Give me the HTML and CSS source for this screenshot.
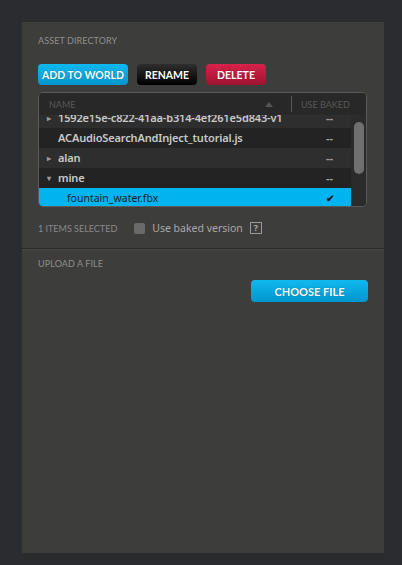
FILE: index.html
```html
<!DOCTYPE html>
<html>
<head>
<meta charset="utf-8">
<link rel="stylesheet" href="styles.css">
</head>
<body>
<div class="panel">
  <section class="sec sec-assets">
    <div class="label">Asset Directory</div>
    <div class="btns">
      <button class="btn btn-blue">Add to World</button>
      <button class="btn btn-black">Rename</button>
      <button class="btn btn-red">Delete</button>
    </div>
    <div class="table">
      <div class="thead">
        <div class="th th-name"><span>Name</span><span class="sort"></span></div>
        <div class="th th-baked">Use Baked</div>
      </div>
      <div class="tbody">
        <div class="rows">
          <div class="row r-a first"><span class="tri">&#9656;</span><span class="name">1592e15e-c822-41aa-b314-4ef261e5d843-v1</span><span class="baked">--</span></div>
          <div class="row r-b"><span class="tri"></span><span class="name">ACAudioSearchAndInject_tutorial.js</span><span class="baked">--</span></div>
          <div class="row r-a"><span class="tri">&#9656;</span><span class="name">alan</span><span class="baked">--</span></div>
          <div class="row r-b"><span class="tri">&#9662;</span><span class="name">mine</span><span class="baked">--</span></div>
          <div class="row sel"><span class="tri"></span><span class="name file">fountain_water.fbx</span><span class="baked check">&#10004;</span></div>
        </div>
        <div class="scroll"><div class="thumb"></div></div>
      </div>
    </div>
    <div class="status">
      <span class="count">1 Items Selected</span>
      <span class="cb"></span>
      <span class="cb-label">Use baked version</span>
      <span class="help">?</span>
    </div>
  </section>
  <section class="sec sec-upload">
    <div class="label">Upload a File</div>
    <div class="upload-row">
      <button class="btn btn-blue btn-choose">Choose File</button>
    </div>
  </section>
</div>
</body>
</html>
```
FILE: styles.css
```css
html, body { margin: 0; padding: 0; }
body {
  background: #2a2c30;
  width: 402px;
  height: 565px;
  overflow: hidden;
  font-family: "Lato", "Liberation Sans", sans-serif;
}
.panel {
  margin: 22px 0 0 22px;
  width: 362px;
  height: 531px;
  background: #3d3d3b;
  display: flex;
  flex-direction: column;
}
.sec { padding: 0 16px; }
.sec-assets { padding-top: 13px; padding-bottom: 13px; }
.label {
  font-size: 9px;
  line-height: 12px;
  text-transform: uppercase;
  color: #8f8f8f;
  letter-spacing: 0.1px;
}
.btns {
  display: flex;
  gap: 9px;
  margin-top: 17px;
}
.btn {
  border: none;
  border-radius: 4px;
  height: 21px;
  padding: 0;
  white-space: nowrap;
  font-family: "Lato", "Liberation Sans", sans-serif;
  font-weight: 700;
  font-size: 10.5px;
  text-transform: uppercase;
  color: #fff;
  text-shadow: 0 0 1px rgba(0,0,0,0.4);
}
.btn-blue { background: linear-gradient(#10b8f0, #0096cc); width: 90px; }
.btn-black { background: linear-gradient(#2e2e2e, #000); width: 60px; }
.btn-red { background: linear-gradient(#d8224a, #9e1330); width: 60px; }
.table {
  margin-top: 7px;
  width: 329px;
  height: 115px;
  border: 1px solid #5a5a5a;
  border-radius: 5px;
  background: #2b2b2b;
  overflow: hidden;
  display: flex;
  flex-direction: column;
  box-sizing: border-box;
}
.thead {
  display: flex;
  height: 22px;
  flex: none;
  background: #282828;
}
.th {
  font-size: 9px;
  text-transform: uppercase;
  color: #585858;
  display: flex;
  align-items: center;
}
.th-name { width: 252px; padding-left: 10px; justify-content: space-between; padding-right: 18px; box-sizing: border-box; }
.sort {
  width: 0; height: 0;
  border-left: 4px solid transparent;
  border-right: 4px solid transparent;
  border-bottom: 5px solid #555;
}
.th-baked { border-left: 1px solid #555; height: 16px; align-self: center; padding-left: 9px; flex: 1; }
.tbody { flex: 1; display: flex; min-height: 0; }
.rows { flex: 1; overflow: hidden; }
.row {
  height: 20px;
  display: flex;
  align-items: center;
  font-family: "Noto Sans", "Open Sans", sans-serif;
  font-weight: 600;
  font-size: 11px;
  letter-spacing: -0.15px;
  color: #c9c9c9;
  white-space: nowrap;
  line-height: 18px;
  padding-bottom: 1px;
  box-sizing: border-box;
}
.row.first { margin-top: -7px; }
.r-a { background: #2e2e2e; }
.r-b { background: #232323; }
.sel { background: #00b4ef; color: #1a1a1a; }
.tri { width: 19px; flex: none; padding-left: 8px; box-sizing: border-box; font-size: 8px; color: #9a9a9a; }
.name { flex: 1; overflow: hidden; min-width: 0; }
.name.file { font-weight: 400; padding-left: 9px; font-size: 10.5px; letter-spacing: 0; }
.baked { width: 39px; flex: none; text-align: center; color: #a0a0a0; font-size: 11px; font-weight: 700; letter-spacing: 0; padding-right: 2px; }
.check { color: #111; font-size: 10px; }
.scroll {
  width: 15px;
  flex: none;
  background: #2b2b2b;
}
.thumb {
  margin: 7px 0 0 3px;
  width: 10px;
  height: 52px;
  border-radius: 5px;
  background: #6f6f6f;
}
.status {
  display: flex;
  align-items: center;
  margin-top: 14px;
  height: 14px;
}
.count { font-size: 9px; text-transform: uppercase; color: #8a8a8a; }
.cb {
  width: 11px; height: 11px;
  border-radius: 2px;
  background: #6a6a6a;
  margin-left: 17px;
}
.cb-label { margin-left: 7px; font-family: "Noto Sans", sans-serif; font-size: 10.5px; color: #a8a8a8; }
.help {
  margin-left: 7px;
  width: 10px; height: 10px;
  border: 1px solid #9a9a9a;
  font-family: "Noto Sans", sans-serif;
  font-size: 9px;
  line-height: 10px;
  text-align: center;
  color: #aaa;
  font-weight: 700;
}
.sec-upload { border-top: 1px solid #2a2a2a; box-shadow: inset 0 1px 0 #474745; padding-top: 9px; }
.upload-row { display: flex; justify-content: flex-end; margin-top: 10px; }
.btn-choose { width: 117px; height: 22px; font-size: 11px; }
```
